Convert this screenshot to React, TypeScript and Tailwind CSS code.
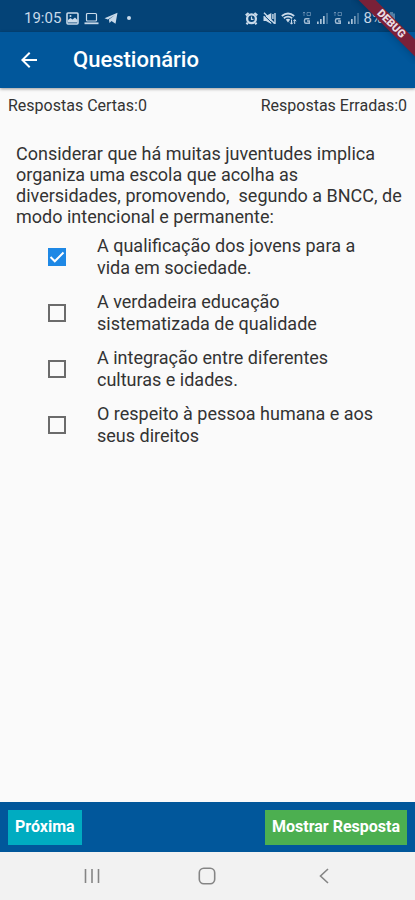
import { useState } from "react";

const QUESTION =
  "Considerar que há muitas juventudes implica organiza uma escola que acolha as diversidades, promovendo,  segundo a BNCC, de modo intencional e permanente:";

const OPTIONS = [
  "A qualificação dos jovens para a vida em sociedade.",
  "A verdadeira educação sistematizada de qualidade",
  "A integração entre diferentes culturas e idades.",
  "O respeito à pessoa humana e aos seus direitos",
];

function PictureIcon() {
  return (
    <svg width="13" height="13" viewBox="0 0 13 13" aria-hidden="true">
      <rect x="1" y="1" width="11" height="11" rx="1" fill="none" stroke="currentColor" strokeWidth="1.600" />
      <path d="M2 10V8l2.500-2 2 1.600L9 5.500l2.500 2.500v2.500H2z" fill="currentColor" />
      <circle cx="4.500" cy="4" r="1" fill="currentColor" />
    </svg>
  );
}

function LaptopIcon() {
  return (
    <svg width="15" height="13" viewBox="0 0 15 13" aria-hidden="true" fill="none" stroke="currentColor">
      <rect x="2.500" y="1.500" width="10" height="7.500" rx="1" strokeWidth="1.200" />
      <path d="M0.500 11.300h14" strokeWidth="1.800" />
    </svg>
  );
}

function TelegramIcon() {
  return (
    <svg width="14" height="13" viewBox="0 0 14 13" aria-hidden="true" fill="currentColor">
      <path d="M0.500 6.300L13.500 0.800l-2 11-4-2.800-2 2-.6-3.500L11 3 3.800 7.400z" />
    </svg>
  );
}

function AlarmIcon() {
  return (
    <svg width="13" height="13" viewBox="0 0 13 13" aria-hidden="true" fill="none" stroke="currentColor">
      <circle cx="6.500" cy="6.800" r="4.400" strokeWidth="2.300" />
      <path d="M0.800 3.400L3.600 1M12.200 3.400L9.400 1M2.800 10.800l-1.300 1.500M10.200 10.800l1.300 1.500" strokeWidth="2.200" />
      <path d="M6.500 4.500V7.300h2" strokeWidth="1.200" />
    </svg>
  );
}

function MutedIcon() {
  return (
    <svg width="13" height="13" viewBox="0 0 13 13" aria-hidden="true">
      <path d="M0.500 4h2.500L8.300 1v11L3 9H0.500z" fill="currentColor" />
      <path d="M0 2.200l10 9.800" stroke="#044377" strokeWidth="1" />
      <path d="M1 0.800l10.500 10.700M9.900 2v5M12 1v11" stroke="currentColor" strokeWidth="1.400" fill="none" />
    </svg>
  );
}

function WifiIcon() {
  return (
    <svg width="16" height="13" viewBox="0 0 16 13" aria-hidden="true" fill="none" stroke="currentColor">
      <path d="M0.800 4Q7 -1 13.200 4M2.800 6.300Q7 3 11.200 6.300" strokeWidth="1.800" />
      <path d="M4.800 7.500Q7 6 9.200 7.500L7 10.500z" fill="currentColor" stroke="none" />
      <path d="M10.500 7.500v4.500M9 10.500l1.500 1.700 1.500-1.700M13.700 12V7.700M12.300 9.200l1.400-1.600 1.500 1.600" strokeWidth="1" />
    </svg>
  );
}

function DataIcon() {
  return (
    <svg width="10" height="14" viewBox="0 0 10 14" aria-hidden="true" fill="none" stroke="currentColor">
      <path d="M2 1v4M1 2.200L2 1l1 1.200M5 1.500h3.500v3H5z" strokeWidth="1" opacity="0.400" />
      <path d="M7.500 7.800H4A1.500 1.500 0 0 0 2.500 9.300v1.400A1.500 1.500 0 0 0 4 12.200h3.300V10H5" strokeWidth="1.400" opacity="0.800" />
    </svg>
  );
}

function SignalIcon({ weak = false }: { weak?: boolean }) {
  return (
    <svg width="11" height="12" viewBox="0 0 11 12" aria-hidden="true" fill="currentColor">
      <path d="M0 9.500h1.700V12H0zM3 7h1.700v5H3z" opacity="0.850" />
      <path d="M6 4h1.700v8H6z" opacity={weak ? 0.6 : 0.85} />
      <path d="M9.300 1h1.500v11H9.300z" opacity="0.400" />
    </svg>
  );
}

function StatusBar() {
  return (
    <div className="flex h-8 items-center justify-between bg-[#044377] pt-1 pr-5 pl-6 text-[15px] leading-5 text-[#c9daea]">
      <div className="flex items-center gap-[5px]">
        <span>19:05</span>
        <PictureIcon />
        <LaptopIcon />
        <TelegramIcon />
        <span className="ml-1 size-1 rounded-full bg-current" />
      </div>
      <div className="flex items-center gap-[5px]">
        <AlarmIcon />
        <MutedIcon />
        <WifiIcon />
        <DataIcon />
        <SignalIcon />
        <DataIcon />
        <SignalIcon weak />
        <span>8%</span>
        <svg width="7" height="12" viewBox="0 0 7 12" aria-hidden="true" fill="currentColor" opacity="0.400">
          <path d="M2 0h3v1.500h2V12H0V1.500h2z" />
        </svg>
      </div>
    </div>
  );
}

function DebugBanner() {
  return (
    <div className="pointer-events-none absolute top-0 right-0 z-20 size-16 overflow-hidden">
      <div className="absolute top-[18px] -right-[26px] flex h-3 w-[100px] rotate-45 items-center justify-center bg-[#7a2138] text-[11px] font-black text-[#eadde4] shadow-md">
        DEBUG
      </div>
    </div>
  );
}

function AppBar() {
  return (
    <header className="z-10 flex h-14 items-center gap-8 bg-[#01579b] pl-[17px] text-white shadow-[0_1px_3px_rgba(0,0,0,0.4)]">
      <button type="button" aria-label="Voltar" className="flex size-6 items-center justify-center">
        <svg width="24" height="24" viewBox="0 0 24 24" fill="currentColor" aria-hidden="true">
          <path d="M20 11H7.830l5.590-5.590L12 4l-8 8 8 8 1.410-1.410L7.830 13H20v-2z" />
        </svg>
      </button>
      <h1 className="text-[22px] leading-7 font-medium">Questionário</h1>
    </header>
  );
}

function Option({ label, checked, onChange }: { label: string; checked: boolean; onChange: () => void }) {
  return (
    <label className="flex items-center gap-[31px]">
      <span className="relative flex size-[18px] shrink-0">
        <input
          type="checkbox"
          checked={checked}
          onChange={onChange}
          className="size-[18px] appearance-none border-2 border-[#6b6b6b] checked:border-[#1e88e5] checked:bg-[#1e88e5]"
        />
        {checked && (
          <svg className="pointer-events-none absolute inset-0" width="18" height="18" viewBox="0 0 18 18" fill="none" aria-hidden="true">
            <path d="M2.500 9l4.300 4.300 8.700-8.800" stroke="#fff" strokeWidth="2" />
          </svg>
        )}
      </span>
      <span className="max-w-[280px] text-lg leading-[22px]">{label}</span>
    </label>
  );
}

function NavigationBar() {
  return (
    <nav className="flex h-12 items-center justify-around bg-[#f2f2f2] px-[34px] text-[#858585]">
      <button type="button" aria-label="Recentes" className="flex size-6 items-center justify-center">
        <svg width="16" height="16" viewBox="0 0 16 16" stroke="currentColor" strokeWidth="1.600" aria-hidden="true">
          <path d="M1.500 1v14M8 1v14M14.500 1v14" />
        </svg>
      </button>
      <button type="button" aria-label="Início" className="flex size-6 items-center justify-center">
        <svg width="18" height="18" viewBox="0 0 18 18" fill="none" stroke="currentColor" strokeWidth="1.600" aria-hidden="true">
          <rect x="1.300" y="1.300" width="15.400" height="15.400" rx="4.500" />
        </svg>
      </button>
      <button type="button" aria-label="Voltar" className="flex size-6 items-center justify-center">
        <svg width="16" height="16" viewBox="0 0 16 16" fill="none" stroke="currentColor" strokeWidth="1.600" aria-hidden="true">
          <path d="M13 1L5.500 8l7.500 7" />
        </svg>
      </button>
    </nav>
  );
}

export default function App() {
  const [selected, setSelected] = useState(0);

  return (
    <div className="relative flex min-h-screen flex-col bg-[#fafafa] font-[Roboto,sans-serif] text-[#333333]">
      <StatusBar />
      <AppBar />
      <DebugBanner />
      <main className="flex-1">
        <div className="flex justify-between px-2 pt-2 text-base leading-5">
          <span>Respostas Certas:0</span>
          <span>Respostas Erradas:0</span>
        </div>
        <section className="pt-[27px] pr-2 pl-4">
          <p id="question" className="text-lg leading-[21px] whitespace-pre-wrap">
            {QUESTION}
          </p>
          <div role="group" aria-labelledby="question" className="flex flex-col gap-3 pt-2 pl-8">
            {OPTIONS.map((label, index) => (
              <Option key={label} label={label} checked={selected === index} onChange={() => setSelected(index)} />
            ))}
          </div>
        </section>
      </main>
      <footer className="flex h-[50px] items-center justify-between bg-[#01579b] px-2 text-base font-bold text-white">
        <button type="button" className="h-[35px] bg-[#00acc1] px-[7px]">
          Próxima
        </button>
        <button type="button" className="h-[35px] bg-[#4caf50] px-[7px]">
          Mostrar Resposta
        </button>
      </footer>
      <NavigationBar />
    </div>
  );
}
